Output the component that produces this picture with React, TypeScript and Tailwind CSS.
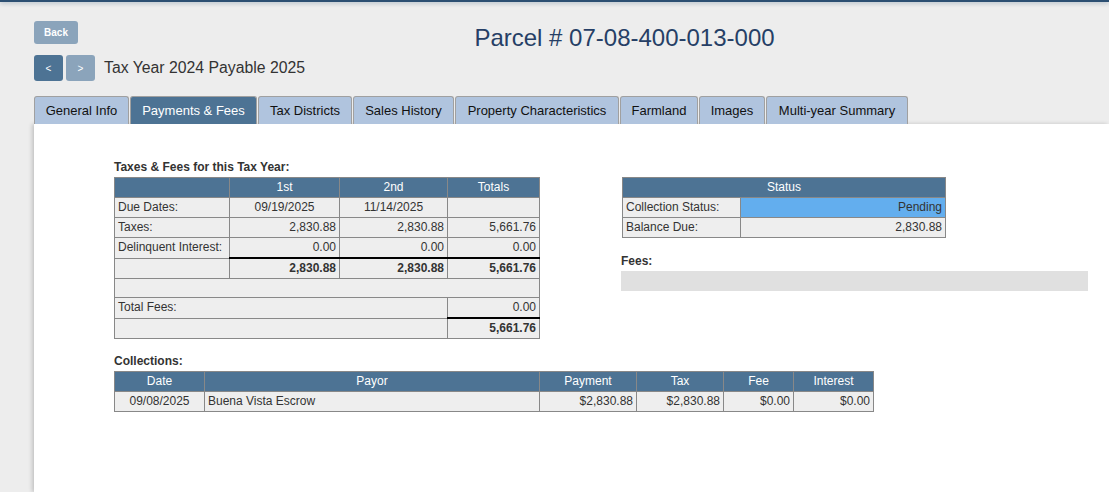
const tabs = [
  { label: "General Info", w: "w-[95px]" },
  { label: "Payments & Fees", w: "w-[127px]", active: true },
  { label: "Tax Districts", w: "w-[94px]" },
  { label: "Sales History", w: "w-[101px]" },
  { label: "Property Characteristics", w: "w-[164px]" },
  { label: "Farmland", w: "w-[78px]" },
  { label: "Images", w: "w-[66px]" },
  { label: "Multi-year Summary", w: "w-[142px]" },
];

const th = "bg-[#4d7394] text-white font-normal border border-[#888] px-[3px] py-[2px] leading-[15px] text-center";
const td = "bg-[#eeeeee] border border-[#888] px-[3px] py-[2px] leading-[15px]";
const thick = "border-t-2 border-t-black";

function Label({ children }: { children: React.ReactNode }) {
  return <div className="text-[12px] leading-[14px] font-bold text-[#333]">{children}</div>;
}

export default function App() {
  return (
    <div
      className="min-h-[492px] bg-[#ededed] text-[#333]"
      style={{ fontFamily: '"Liberation Sans", Arial, sans-serif' }}
    >
      <div className="h-[2px] bg-[#2c4f72] shadow-[0_1px_4px_rgba(44,79,114,0.45)]" />
      <div className="grid grid-cols-[106px_1fr] pl-[34px]">
        <div className="flex flex-col">
          <button className="mt-[19px] w-[44px] h-[23px] rounded-[3px] bg-[#8ba4bb] text-white text-[10px] font-bold">
            Back
          </button>
          <div className="mt-[11px] flex items-center whitespace-nowrap">
            <button className="shrink-0 w-[29px] h-[26px] rounded-[3px] bg-[#4d7394] text-white text-[10px]">&lt;</button>
            <button className="shrink-0 ml-[3px] w-[29px] h-[26px] rounded-[3px] bg-[#8ba4bb] text-white text-[10px]">&gt;</button>
            <span className="shrink-0 ml-[9px] text-[15.8px] text-[#333]">Tax Year 2024 Payable 2025</span>
          </div>
        </div>
        <div className="pt-[22px] text-center text-[24px] leading-[28px] text-[#263f66]">
          Parcel # 07-08-400-013-000
        </div>
      </div>

      <div className="mt-[15px] pl-[34px] flex gap-[1px]">
        {tabs.map((t) => (
          <div
            key={t.label}
            className={`${t.w} h-[28px] flex items-center justify-center rounded-t-[3px] border border-b-0 border-[#a0a0a0] text-[13px] ${
              t.active ? "bg-[#4d7394] text-white" : "bg-[#b0c4de] text-[#111]"
            }`}
          >
            {t.label}
          </div>
        ))}
      </div>

      <div className="ml-[34px] bg-white min-h-[368px] pl-[80px] pt-[36px] shadow-[-2px_0_4px_rgba(0,0,0,0.18)]">
        <div className="flex items-start gap-[82px]">
          <div>
            <Label>Taxes &amp; Fees for this Tax Year:</Label>
            <table className="mt-[3px] w-[425px] table-fixed border-collapse text-[12px]">
              <colgroup>
                <col className="w-[115px]" />
                <col className="w-[110px]" />
                <col className="w-[108px]" />
                <col className="w-[92px]" />
              </colgroup>
              <tbody>
                <tr>
                  <th className={th}></th>
                  <th className={th}>1st</th>
                  <th className={th}>2nd</th>
                  <th className={th}>Totals</th>
                </tr>
                <tr>
                  <td className={td}>Due Dates:</td>
                  <td className={`${td} text-center`}>09/19/2025</td>
                  <td className={`${td} text-center`}>11/14/2025</td>
                  <td className={td}></td>
                </tr>
                <tr>
                  <td className={td}>Taxes:</td>
                  <td className={`${td} text-right`}>2,830.88</td>
                  <td className={`${td} text-right`}>2,830.88</td>
                  <td className={`${td} text-right`}>5,661.76</td>
                </tr>
                <tr>
                  <td className={`${td} whitespace-nowrap`}>Delinquent Interest:</td>
                  <td className={`${td} text-right`}>0.00</td>
                  <td className={`${td} text-right`}>0.00</td>
                  <td className={`${td} text-right`}>0.00</td>
                </tr>
                <tr>
                  <td className={td}></td>
                  <td className={`${td} ${thick} text-right font-bold`}>2,830.88</td>
                  <td className={`${td} ${thick} text-right font-bold`}>2,830.88</td>
                  <td className={`${td} ${thick} text-right font-bold`}>5,661.76</td>
                </tr>
                <tr>
                  <td className={`${td} h-[19px]`} colSpan={4}></td>
                </tr>
                <tr>
                  <td className={td} colSpan={3}>Total Fees:</td>
                  <td className={`${td} text-right`}>0.00</td>
                </tr>
                <tr>
                  <td className={td} colSpan={3}></td>
                  <td className={`${td} ${thick} text-right font-bold`}>5,661.76</td>
                </tr>
              </tbody>
            </table>
          </div>

          <div className="pt-[17px]">
            <table className="w-[323px] table-fixed border-collapse text-[12px]">
              <colgroup>
                <col className="w-[118px]" />
                <col className="w-[205px]" />
              </colgroup>
              <tbody>
                <tr>
                  <th className={th} colSpan={2}>Status</th>
                </tr>
                <tr>
                  <td className={td}>Collection Status:</td>
                  <td className="bg-[#63aeee] border border-[#888] px-[3px] py-[2px] leading-[15px] text-right">Pending</td>
                </tr>
                <tr>
                  <td className={td}>Balance Due:</td>
                  <td className={`${td} text-right`}>2,830.88</td>
                </tr>
              </tbody>
            </table>
            <div className="mt-[16px] -ml-[1px]">
              <Label>Fees:</Label>
              <div className="mt-[3px] w-[467px] h-[20px] bg-[#e0e0e0]" />
            </div>
          </div>
        </div>

        <div className="mt-[15px]">
          <Label>Collections:</Label>
          <table className="mt-[3px] w-[759px] table-fixed border-collapse text-[12px]">
            <colgroup>
              <col className="w-[90px]" />
              <col className="w-[335px]" />
              <col className="w-[97px]" />
              <col className="w-[87px]" />
              <col className="w-[70px]" />
              <col className="w-[80px]" />
            </colgroup>
            <tbody>
              <tr>
                <th className={th}>Date</th>
                <th className={th}>Payor</th>
                <th className={th}>Payment</th>
                <th className={th}>Tax</th>
                <th className={th}>Fee</th>
                <th className={th}>Interest</th>
              </tr>
              <tr>
                <td className={`${td} text-center`}>09/08/2025</td>
                <td className={td}>Buena Vista Escrow</td>
                <td className={`${td} text-right`}>$2,830.88</td>
                <td className={`${td} text-right`}>$2,830.88</td>
                <td className={`${td} text-right`}>$0.00</td>
                <td className={`${td} text-right`}>$0.00</td>
              </tr>
            </tbody>
          </table>
        </div>
      </div>
    </div>
  );
}
